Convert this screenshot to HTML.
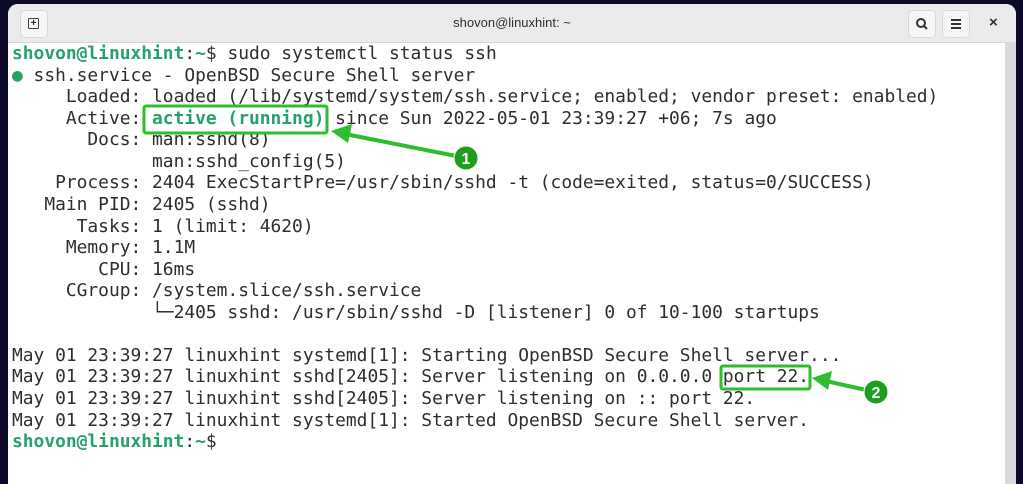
<!DOCTYPE html>
<html><head><style>
body{margin:0;width:1023px;height:476px;background:#0d0b2a;overflow:hidden;position:relative}
.win{position:absolute;left:8px;top:4px;width:1008px;height:480px;background:#fff;border-radius:10px 10px 0 0;overflow:hidden}
.tb{height:38px;background:#ebebeb;border-bottom:1px solid #d6d6d6;position:relative;font-family:"Liberation Sans",sans-serif;font-size:13px;color:#2e2e2e}
.tb .t{position:absolute;left:0;right:0;top:11px;text-align:center}
.btn{position:absolute;top:6px;width:26px;height:26px;border-radius:5px;background:#f6f6f6;border:1px solid #d8d8d8}
.sb{position:absolute;right:0;top:39px;width:11px;bottom:0;background:#d9d9d9}
pre{position:absolute;left:4px;top:39px;margin:0;font-family:"DejaVu Sans Mono",monospace;font-size:17.9px;line-height:21.56px;color:#2e2e2e}
.g{color:#26a269;font-weight:bold}
.a{color:#26a269;font-weight:bold}
</style></head><body>
<div class="win">
<div class="tb"><div class="btn" style="left:12px"><div style="position:absolute;left:7px;top:7px;width:9px;height:9px;border:1.5px solid #444;border-radius:1px;font-size:10px;line-height:9px;text-align:center;font-weight:bold">+</div></div>
<div class="t">shovon@linuxhint: ~</div>
<div class="btn" style="left:900px"><svg width="26" height="26"><circle cx="12" cy="12" r="4" fill="none" stroke="#333" stroke-width="2"/><line x1="15" y1="15" x2="18" y2="18" stroke="#333" stroke-width="2"/></svg></div>
<div class="btn" style="left:934px"><svg width="26" height="26"><path d="M8 9h10M8 13h10M8 17h10" stroke="#333" stroke-width="2"/></svg></div>
<div style="position:absolute;left:981px;top:10px;font-size:15px;font-weight:bold">×</div>
</div>
<div class="sb"></div>
<pre><span class="g">shovon@linuxhint</span>:<span class="g">~</span>$ sudo systemctl status ssh
<span style="color:#26a269">●</span> ssh.service - OpenBSD Secure Shell server
     Loaded: loaded (/lib/systemd/system/ssh.service; enabled; vendor preset: enabled)
     Active: <span class="a">active (running)</span> since Sun 2022-05-01 23:39:27 +06; 7s ago
       Docs: man:sshd(8)
             man:sshd_config(5)
    Process: 2404 ExecStartPre=/usr/sbin/sshd -t (code=exited, status=0/SUCCESS)
   Main PID: 2405 (sshd)
      Tasks: 1 (limit: 4620)
     Memory: 1.1M
        CPU: 16ms
     CGroup: /system.slice/ssh.service
             └─2405 sshd: /usr/sbin/sshd -D [listener] 0 of 10-100 startups

May 01 23:39:27 linuxhint systemd[1]: Starting OpenBSD Secure Shell server...
May 01 23:39:27 linuxhint sshd[2405]: Server listening on 0.0.0.0 port 22.
May 01 23:39:27 linuxhint sshd[2405]: Server listening on :: port 22.
May 01 23:39:27 linuxhint systemd[1]: Started OpenBSD Secure Shell server.
<span class="g">shovon@linuxhint</span>:<span class="g">~</span>$ </pre>
</div>
<svg style="position:absolute;left:0;top:0" width="1023" height="476">
<rect x="144" y="106" width="183" height="27" rx="2" fill="none" stroke="#2ebd2e" stroke-width="3"/>
<line x1="456" y1="156" x2="345" y2="134" stroke="#2ebd2e" stroke-width="4"/>
<polygon points="331,131 352,124 348,143" fill="#2ebd2e"/>
<circle cx="466" cy="158" r="12" fill="#1e9e1e" stroke="#fff" stroke-width="1"/>
<text x="466" y="164" font-family="Liberation Sans" font-weight="bold" font-size="16" fill="#fff" text-anchor="middle">1</text>
<rect x="721" y="366" width="89" height="23" rx="2" fill="none" stroke="#2ebd2e" stroke-width="3"/>
<line x1="866" y1="390" x2="826" y2="381" stroke="#2ebd2e" stroke-width="4"/>
<polygon points="812,378 832,371 828,390" fill="#2ebd2e"/>
<circle cx="876" cy="392" r="12" fill="#1e9e1e" stroke="#fff" stroke-width="1"/>
<text x="876" y="398" font-family="Liberation Sans" font-weight="bold" font-size="16" fill="#fff" text-anchor="middle">2</text>
</svg>
</body></html>
